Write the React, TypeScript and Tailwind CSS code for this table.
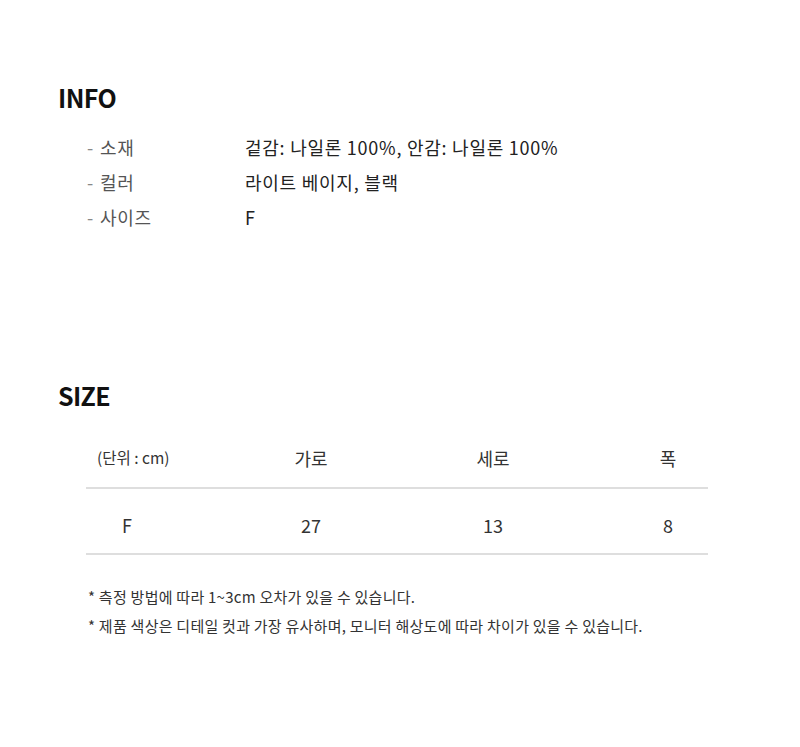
import React from "react";

const font = {
  fontFamily: '"Noto Sans CJK KR", "Noto Sans", sans-serif',
};

const info = [
  { label: "소재", value: "겉감: 나일론 100%, 안감: 나일론 100%" },
  { label: "컬러", value: "라이트 베이지, 블랙" },
  { label: "사이즈", value: "F" },
];

const Row = ({ cells, className }: { cells: string[]; className: string }) => (
  <div className={`flex items-center border-b-2 border-[#dedede] ${className}`}>
    <div className="w-[82px] text-center">{cells[0]}</div>
    <div className="ml-[82px] w-[122px] text-center">{cells[1]}</div>
    <div className="ml-[60px] w-[122px] text-center">{cells[2]}</div>
    <div className="ml-[84px] w-[60px] text-center">{cells[3]}</div>
  </div>
);

export default function App() {
  return (
    <div className="min-h-[747px] w-[800px] bg-white text-[#222]" style={font}>
      <div className="px-[58px] pt-[81px]">
        <h2 className="text-[25px] font-bold leading-[32px] tracking-tight text-[#111]">
          INFO
        </h2>
        <ul className="mt-[17px] pl-[29px] text-[18px] leading-[35px] tracking-[0.75px]">
          {info.map((r) => (
            <li key={r.label} className="flex">
              <span className="w-[158px] text-[#555]">
                <span className="mr-[6px] text-[#888]">-</span>
                {r.label}
              </span>
              <span className="text-[#222]">{r.value}</span>
            </li>
          ))}
        </ul>

        <h2 className="mt-[144px] text-[25px] font-bold leading-[32px] tracking-tight text-[#111]">
          SIZE
        </h2>
        <div className="mt-[18px] ml-[28px] w-[622px] text-[18px] text-[#333]">
          <div className="flex h-[60px] items-center border-b-2 border-[#dedede]">
            <div className="w-[164px] pl-[11px] text-[15.5px]">(단위 : cm)</div>
            <div className="w-[122px] text-center">가로</div>
            <div className="ml-[60px] w-[122px] text-center">세로</div>
            <div className="ml-[84px] w-[60px] text-center">폭</div>
          </div>
          <Row cells={["F", "27", "13", "8"]} className="h-[66px] pt-[9px]" />
        </div>

        <div className="mt-[27px] pl-[30px] text-[15px] leading-[29px] tracking-[0.25px] text-[#333]">
          <p>* 측정 방법에 따라 1~3cm 오차가 있을 수 있습니다.</p>
          <p>* 제품 색상은 디테일 컷과 가장 유사하며, 모니터 해상도에 따라 차이가 있을 수 있습니다.</p>
        </div>
      </div>
    </div>
  );
}
